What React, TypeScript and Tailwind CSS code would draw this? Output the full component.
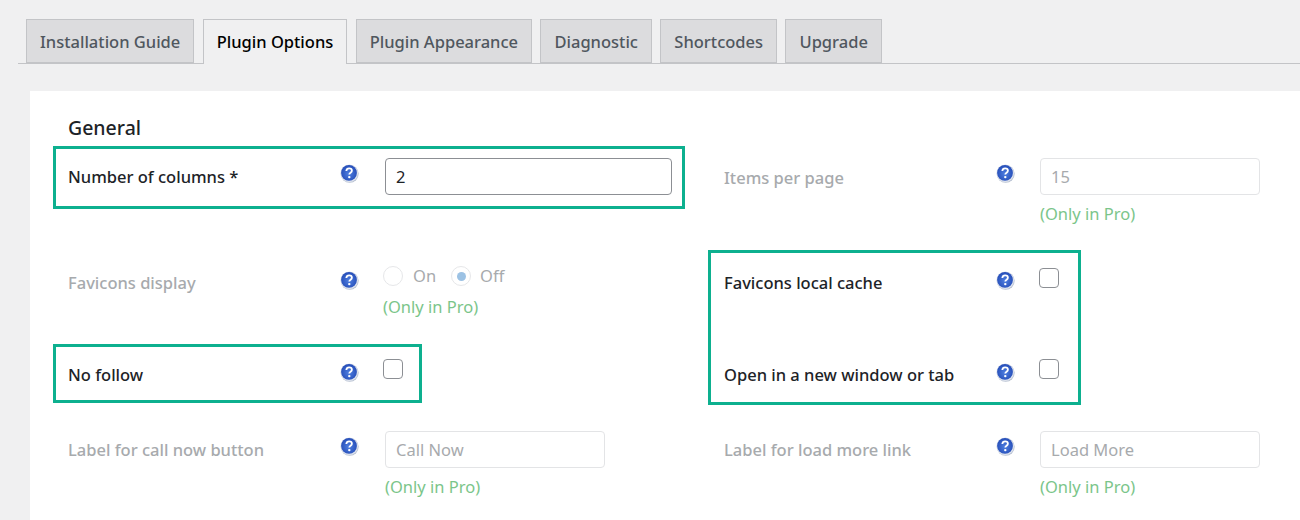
const font = "font-['Noto_Sans','Open_Sans',sans-serif]"

const tabs = ['Installation Guide', 'Plugin Options', 'Plugin Appearance', 'Diagnostic', 'Shortcodes', 'Upgrade']

function HelpIcon() {
  return (
    <svg width="19" height="19" viewBox="0 0 19 19" className="shrink-0">
      <defs>
        <radialGradient id="helpBlue" cx="50%" cy="55%" r="60%">
          <stop offset="0%" stopColor="#4f7fe0" />
          <stop offset="100%" stopColor="#2148b4" />
        </radialGradient>
      </defs>
      <circle cx="9.7" cy="9.8" r="9" fill="#b9c2d2" />
      <circle cx="9.2" cy="9.2" r="8.8" fill="#dfe4ee" />
      <circle cx="9" cy="8.9" r="7.9" fill="url(#helpBlue)" />
      <path d="M6.3 7c.2-1.7 1.3-2.6 2.8-2.6 1.6 0 2.8 1 2.8 2.3 0 2-2.6 2-2.6 3.8" fill="none" stroke="#fff" strokeWidth="1.8" />
      <circle cx="9.3" cy="13.1" r="1.2" fill="#fff" />
    </svg>
  )
}

function Label({ text, muted }: { text: string; muted?: boolean }) {
  return (
    <div className={`w-[272px] shrink-0 text-[16.5px] font-medium leading-6 ${muted ? 'text-[#a7aaad]' : 'text-[#1d2327]'}`}>
      {text}
    </div>
  )
}

function OnlyPro() {
  return <div className="mt-[7px] text-[16.5px] leading-6 text-[#7bc58a]">(Only in Pro)</div>
}

function TextBox({ value, placeholder, wide }: { value?: string; placeholder?: string; wide?: boolean }) {
  return (
    <div
      className={`flex h-[37px] items-center rounded-[4px] border px-[10px] pt-px text-[16.5px] ${
        wide ? 'w-[287px] border-[#8c8f94] text-[#1d2327]' : 'w-[220px] border-[#e3e4e6] text-[#a7aaad]'
      }`}
    >
      {value ?? placeholder}
    </div>
  )
}

function Checkbox() {
  return <div className="h-5 w-5 rounded-[4px] border border-[#8c8f94] bg-white" />
}

function Radio({ checked }: { checked?: boolean }) {
  return (
    <div className="flex h-5 w-5 items-center justify-center rounded-full border border-[#e6e7e9] bg-white">
      {checked && <div className="h-[9px] w-[9px] rounded-full bg-[#9cc2e4]" />}
    </div>
  )
}

export default function App() {
  return (
    <div className={`h-[520px] w-[1300px] overflow-hidden bg-[#f0f0f1] ${font}`}>
      <div className="ml-[18px] mt-[19px] flex h-[45px] items-stretch gap-[8.4px] border-b border-[#c3c4c7] pl-[8px]">
        {tabs.map((t) => (
          <div
            key={t}
            className={`border border-[#c3c4c7] px-[13px] pt-[10px] text-[16.5px] font-medium leading-6 ${
              t === 'Plugin Options'
                ? 'h-[45px] border-b-0 bg-[#f0f0f1] text-black'
                : 'h-[44px] bg-[#dcdcde] text-[#50575e]'
            }`}
          >
            {t}
          </div>
        ))}
      </div>

      <div className="relative ml-[30px] mt-[27px] h-[429px] bg-white pl-[38px] pt-[24px]">
        <h2 className="text-[19.5px] font-medium leading-[26px] text-[#1d2327]">General</h2>

        {/* annotation frames */}
        <div className="absolute left-[23px] top-[55px] h-[63px] w-[632px] border-[3px] border-[#0db08f]" />
        <div className="absolute left-[23px] top-[253px] h-[59px] w-[369px] border-[3px] border-[#0db08f]" />
        <div className="absolute left-[678px] top-[159px] h-[155px] w-[373px] border-[3px] border-[#0db08f]" />

        <div className="mt-[17px] grid grid-cols-[656px_1fr] grid-rows-[106px_92px_75px_auto]">
          <div className="flex items-start">
            <div className="pt-[7px]"><Label text="Number of columns *" /></div>
            <div className="w-[45px] pt-[6px]"><HelpIcon /></div>
            <TextBox value="2" wide />
          </div>
          <div className="flex items-start">
            <div className="pt-[8px]"><Label text="Items per page" muted /></div>
            <div className="w-[44px] pt-[6px]"><HelpIcon /></div>
            <div>
              <TextBox placeholder="15" />
              <OnlyPro />
            </div>
          </div>

          <div className="flex items-start">
            <div className="pt-[7px]"><Label text="Favicons display" muted /></div>
            <div className="w-[43px] pt-[7px]"><HelpIcon /></div>
            <div>
              <div className="flex items-center text-[16.5px] leading-6 text-[#a7aaad]">
                <Radio />
                <span className="ml-[10px] mr-[15px]">On</span>
                <Radio checked />
                <span className="ml-[9px]">Off</span>
              </div>
              <OnlyPro />
            </div>
          </div>
          <div className="flex items-start">
            <div className="pt-[7px]"><Label text="Favicons local cache" /></div>
            <div className="w-[43px] pt-[7px]"><HelpIcon /></div>
            <div className="pt-[4px]"><Checkbox /></div>
          </div>

          <div className="flex items-start">
            <div className="pt-[7px]"><Label text="No follow" /></div>
            <div className="w-[43px] pt-[7px]"><HelpIcon /></div>
            <div className="pt-[3px]"><Checkbox /></div>
          </div>
          <div className="flex items-start">
            <div className="pt-[7px]"><Label text="Open in a new window or tab" /></div>
            <div className="w-[43px] pt-[7px]"><HelpIcon /></div>
            <div className="pt-[3px]"><Checkbox /></div>
          </div>

          <div className="flex items-start">
            <div className="pt-[7px]"><Label text="Label for call now button" muted /></div>
            <div className="w-[45px] pt-[6px]"><HelpIcon /></div>
            <div>
              <TextBox placeholder="Call Now" />
              <OnlyPro />
            </div>
          </div>
          <div className="flex items-start">
            <div className="pt-[7px]"><Label text="Label for load more link" muted /></div>
            <div className="w-[44px] pt-[6px]"><HelpIcon /></div>
            <div>
              <TextBox placeholder="Load More" />
              <OnlyPro />
            </div>
          </div>
        </div>
      </div>
    </div>
  )
}
